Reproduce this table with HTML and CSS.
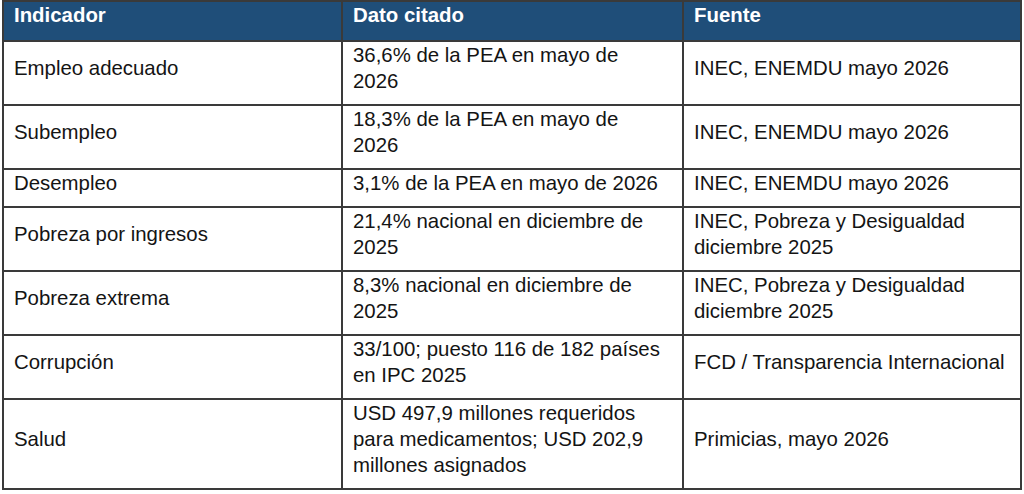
FILE: index.html
```html
<!DOCTYPE html>
<html lang="es">
<head>
<meta charset="utf-8">
<title>Indicadores</title>
<link rel="stylesheet" href="styles.css">
</head>
<body>
<table class="data">
  <colgroup>
    <col class="c1">
    <col class="c2">
    <col class="c3">
  </colgroup>
  <thead>
    <tr>
      <th>Indicador</th>
      <th>Dato citado</th>
      <th>Fuente</th>
    </tr>
  </thead>
  <tbody>
    <tr>
      <td class="ind">Empleo adecuado</td>
      <td>36,6% de la PEA en mayo de 2026</td>
      <td class="src">INEC, ENEMDU mayo 2026</td>
    </tr>
    <tr>
      <td class="ind">Subempleo</td>
      <td>18,3% de la PEA en mayo de 2026</td>
      <td class="src">INEC, ENEMDU mayo 2026</td>
    </tr>
    <tr>
      <td class="ind">Desempleo</td>
      <td>3,1% de la PEA en mayo de 2026</td>
      <td class="src">INEC, ENEMDU mayo 2026</td>
    </tr>
    <tr>
      <td class="ind">Pobreza por ingresos</td>
      <td>21,4% nacional en diciembre de 2025</td>
      <td class="src">INEC, Pobreza y Desigualdad diciembre 2025</td>
    </tr>
    <tr>
      <td class="ind">Pobreza extrema</td>
      <td>8,3% nacional en diciembre de 2025</td>
      <td class="src">INEC, Pobreza y Desigualdad diciembre 2025</td>
    </tr>
    <tr>
      <td class="ind">Corrupción</td>
      <td>33/100; puesto 116 de 182 países en IPC 2025</td>
      <td class="src">FCD / Transparencia Internacional</td>
    </tr>
    <tr>
      <td class="ind">Salud</td>
      <td>USD 497,9 millones requeridos para medicamentos; USD 202,9 millones asignados</td>
      <td class="src">Primicias, mayo 2026</td>
    </tr>
  </tbody>
</table>
</body>
</html>
```

FILE: styles.css
```css
html, body {
  margin: 0;
  padding: 0;
  background: #ffffff;
}

body {
  font-family: "Liberation Sans", Arial, sans-serif;
  color: #141414;
}

.data {
  margin: 0 0 0 2px;
  width: 1018px;
  table-layout: fixed;
  border-collapse: collapse;
  font-size: 20.4px;
  line-height: 26px;
}

.c1 { width: 339px; }
.c2 { width: 341px; }
.c3 { width: 338px; }

.data th,
.data td {
  border: 2px solid #3a3a3a;
  padding: 0 14px 10px 10px;
  text-align: left;
  vertical-align: top;
}

.data th {
  background: #1f4e79;
  color: #ffffff;
  font-weight: bold;
  padding-bottom: 12px;
}

.data td.ind,
.data td.src {
  vertical-align: middle;
}
```
